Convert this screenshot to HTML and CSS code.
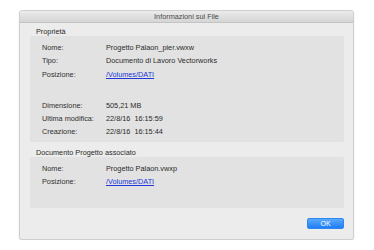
FILE: index.html
```html
<!DOCTYPE html>
<html>
<head>
<meta charset="utf-8">
<link rel="stylesheet" href="styles.css">
</head>
<body>
<div class="window">
  <div class="titlebar">Informazioni sul File</div>
  <div class="content">
    <div class="section-label">Proprietà</div>
    <div class="box box-props">
      <div class="row"><span class="label">Nome:</span><span class="value">Progetto Palaon_pier.vwxw</span></div>
      <div class="row"><span class="label">Tipo:</span><span class="value">Documento di Lavoro Vectorworks</span></div>
      <div class="row"><span class="label">Posizione:</span><a class="value link">/Volumes/DATI</a></div>
      <div class="row row-gap"><span class="label">Dimensione:</span><span class="value">505,21 MB</span></div>
      <div class="row"><span class="label">Ultima modifica:</span><span class="value">22/8/16&nbsp; 16:15:59</span></div>
      <div class="row"><span class="label">Creazione:</span><span class="value">22/8/16&nbsp; 16:15:44</span></div>
    </div>
    <div class="section-label second">Documento Progetto associato</div>
    <div class="box box-assoc">
      <div class="row"><span class="label">Nome:</span><span class="value">Progetto Palaon.vwxp</span></div>
      <div class="row"><span class="label">Posizione:</span><a class="value link">/Volumes/DATI</a></div>
    </div>
    <div class="actions">
      <button class="ok">OK</button>
    </div>
  </div>
</div>
</body>
</html>
```

FILE: styles.css
```css
* { box-sizing: border-box; }
html, body { margin: 0; padding: 0; background: #ffffff; }
body {
  font-family: "Liberation Sans", Arial, sans-serif;
  font-size: 7.3px;
  color: #2b2b2b;
  padding: 10px 0 0 19px;
}
.window {
  width: 335px;
  background: #ececec;
  border: 1px solid #cfcfcf;
  border-radius: 3px;
  box-shadow: 0 1px 2px rgba(0,0,0,0.12);
  overflow: hidden;
}
.titlebar {
  height: 12px;
  line-height: 11px;
  text-align: center;
  color: #4a4a4a;
  background: linear-gradient(#ebebeb, #d5d5d5);
  border-bottom: 1px solid #c4c4c4;
}
.content {
  padding: 0 9px 10px 10px;
}
.section-label {
  line-height: 8px;
  margin-top: 5px;
  padding-left: 6px;
  color: #2a2a2a;
}
.section-label.second { margin-top: 7px; }
.box {
  background: #e2e2e2;
  border-radius: 2px;
  padding-left: 12px;
}
.box-props { padding-top: 5px; padding-bottom: 3px; }
.box-assoc { padding-top: 5px; padding-bottom: 20px; }
.row {
  display: flex;
  line-height: 13.25px;
  height: 13.25px;
}
.row-gap { margin-top: 18px; }
.label { width: 64px; flex: none; color: #303030; }
.value { color: #2b2b2b; }
.link { color: #2037d8; text-decoration: underline; }
.actions {
  display: flex;
  justify-content: flex-end;
  margin-top: 10px;
}
.ok {
  width: 37px;
  height: 11px;
  padding: 0;
  border: 1px solid #2f86f0;
  border-radius: 2px;
  background: linear-gradient(#5aa9fb, #1f7ef4);
  color: #ffffff;
  font-family: "Liberation Sans", Arial, sans-serif;
  font-size: 7px;
  line-height: 9px;
}
```
